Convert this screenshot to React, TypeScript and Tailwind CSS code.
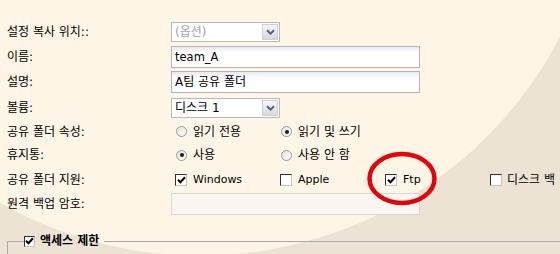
import type { ReactNode } from 'react';

function Chevron() {
  return (
    <svg width="9" height="6" viewBox="0 0 9 6" fill="none">
      <path d="M1 1.2 L4.5 4.6 L8 1.2" stroke="#4d5f80" strokeWidth="2" />
    </svg>
  );
}

function Select({ value, muted = false }: { value: string; muted?: boolean }) {
  return (
    <div className="w-[109px] h-[20px] flex items-center border border-[#b9b9b9] bg-white">
      <span className={`flex-1 pl-[3px] leading-[18px] ${muted ? 'text-[#a3a3a3]' : 'text-black'}`}>
        {value}
      </span>
      <span className="w-[16px] h-[16px] mr-px flex items-center justify-center border border-[#cfcfcf] bg-[linear-gradient(#f7f7f7,#d9d9d9)]">
        <Chevron />
      </span>
    </div>
  );
}

function TextInput({ value = '', disabled = false, latin = false }: { value?: string; disabled?: boolean; latin?: boolean }) {
  return (
    <div
      className={`w-[249px] h-[22px] flex items-center pl-[3px] border ${
        disabled
          ? 'border-[#dcd6cc] bg-[#fbf7f0]'
          : 'border-[#b4b4b4] bg-[linear-gradient(#e8eaf2,#ffffff_6px)]'
      }`}
    >
      <span className={latin ? 'text-[11.5px]' : ''}>{value}</span>
    </div>
  );
}

function Radio({ label, checked = false }: { label: string; checked?: boolean }) {
  return (
    <div className="w-[105px] pl-[5px] flex items-center gap-[6px] whitespace-nowrap">
      <span className="w-[11px] h-[11px] rounded-full border border-[#9b9b9b] bg-[linear-gradient(135deg,#e2e2e2,#ffffff)] flex items-center justify-center">
        {checked && <span className="w-[4px] h-[4px] rounded-full bg-[#1c1c1c]" />}
      </span>
      <span>{label}</span>
    </div>
  );
}

function Box({ checked = false, small = false }: { checked?: boolean; small?: boolean }) {
  return (
    <span
      className={`${small ? 'w-[11px] h-[11px]' : 'w-[12px] h-[12px]'} shrink-0 flex items-center justify-center bg-white border border-t-[#303030] border-l-[#303030] border-r-[#c8c4bc] border-b-[#c8c4bc]`}
    >
      {checked && (
        <svg width="9" height="8" viewBox="0 0 9 8" fill="none">
          <path d="M1 3.8 L3.4 6.2 L8 1.2" stroke="#000" strokeWidth="2" />
        </svg>
      )}
    </span>
  );
}

function Check({ label, checked = false, latin = false }: { label: string; checked?: boolean; latin?: boolean }) {
  return (
    <div className="w-[105px] shrink-0 pl-[4px] flex items-center gap-[6px] whitespace-nowrap">
      <Box checked={checked} />
      <span className={latin ? 'text-[11px]' : ''}>{label}</span>
    </div>
  );
}

function Row({ label, className, children }: { label: string; className: string; children: ReactNode }) {
  return (
    <div className={`flex items-center ${className}`}>
      <span className="w-[164px] shrink-0 whitespace-nowrap">{label}</span>
      <div className="flex items-center">{children}</div>
    </div>
  );
}

export default function App() {
  return (
    <div className="relative w-[560px] h-[254px] overflow-hidden bg-[radial-gradient(circle_at_200px_-150px,#fdf6e7_405px,#ede3d5_406px)] font-['DejaVu_Sans','Noto_Sans_CJK_KR',sans-serif] text-[12px] leading-[14px] text-black">
      <div className="pt-[20px] pl-[7px]">
        <Row label="설정 복사 위치::" className="h-[24px]">
          <Select value="(옵션)" muted />
        </Row>
        <Row label="이름:" className="h-[25px]">
          <TextInput value="team_A" latin />
        </Row>
        <Row label="설명:" className="h-[26px]">
          <TextInput value="A팀 공유 폴더" />
        </Row>
        <Row label="볼륨:" className="h-[25px]">
          <Select value="디스크 1" />
        </Row>
        <Row label="공유 폴더 속성:" className="h-[23px]">
          <Radio label="읽기 전용" />
          <Radio label="읽기 및 쓰기" checked />
        </Row>
        <Row label="휴지통:" className="h-[24px]">
          <Radio label="사용" checked />
          <Radio label="사용 안 함" />
        </Row>
        <Row label="공유 폴더 지원:" className="h-[25px]">
          <Check label="Windows" checked latin />
          <Check label="Apple" latin />
          <Check label="Ftp" checked latin />
          <div className="shrink-0 pl-[4px] flex items-center gap-[5px] whitespace-nowrap">
            <Box />
            <span>디스크 백</span>
          </div>
        </Row>
        <Row label="원격 백업 암호:" className="h-[23px]">
          <TextInput disabled />
        </Row>
      </div>

      {/* 액세스 제한 */}
      <fieldset className="ml-[7px] mt-[20px] h-[40px] border-t border-l border-[#a9a9a9]">
        <legend className="ml-[16px] pr-[5px] flex items-center gap-[5px]">
          <Box checked small />
          <span className="font-bold leading-[12px]">액세스 제한</span>
        </legend>
      </fieldset>

      {/* red highlight around Ftp */}
      <svg className="absolute left-[366px] top-[151px]" width="72" height="55" viewBox="0 0 72 55" fill="none">
        <ellipse cx="36" cy="27.5" rx="32.5" ry="24.5" stroke="#e5000a" strokeWidth="4.5" />
      </svg>
    </div>
  );
}
